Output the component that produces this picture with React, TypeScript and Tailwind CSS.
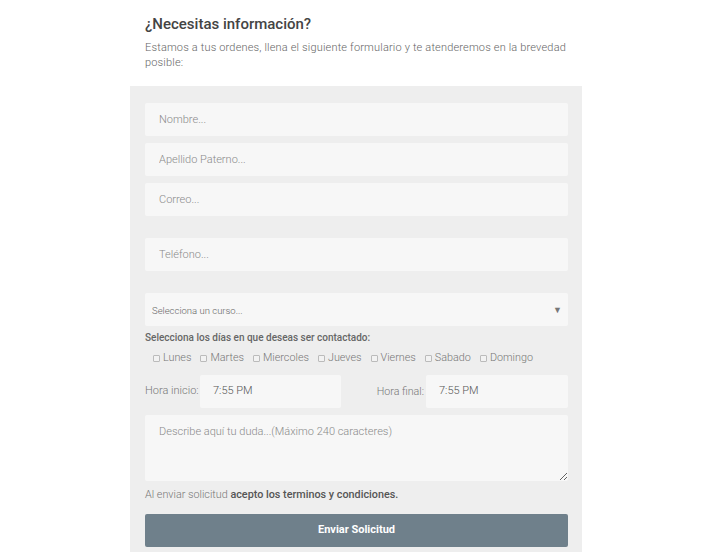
import React from 'react';

const days = ['Lunes', 'Martes', 'Miercoles', 'Jueves', 'Viernes', 'Sabado', 'Domingo'];

const field =
  "w-full h-[33px] rounded-[2px] bg-[#f7f7f7] px-[14px] text-[11px] font-light text-[#555] placeholder:text-[#8a8a8a] outline-none";

export default function App() {
  return (
    <div className="w-[712px] h-[552px] bg-white overflow-hidden font-['Roboto',sans-serif]">
      <div className="ml-[130px] w-[452px]">
        <div className="px-[15px] pt-[14px] pb-[16px]">
          <h2 className="text-[15px] leading-[20px] font-medium text-[#444]">¿Necesitas información?</h2>
          <p className="mt-[6px] text-[11px] tracking-[0.17px] leading-[15px] font-light text-[#666]">
            Estamos a tus ordenes, llena el siguiente formulario y te atenderemos en la brevedad posible:
          </p>
        </div>
        <div className="bg-[#eeeeee] pl-[15px] pr-[14px] pt-[17px] pb-[8px] min-h-[470px]">
          <div className="flex flex-col gap-[7px]">
            <input className={field} placeholder="Nombre..." />
            <input className={field} placeholder="Apellido Paterno..." />
            <input className={field} placeholder="Correo..." />
          </div>
          <input className={`${field} mt-[22px]`} placeholder="Teléfono..." />
          <div className="mt-[22px] h-[33px] rounded-[2px] bg-[#f7f7f7] flex items-center justify-between pl-[7px] pr-[6px] pt-[3px]">
            <span className="text-[9.5px] font-light text-[#666]">Selecciona un curso...</span>
            <span className="text-[9px] text-[#777]">▼</span>
          </div>
          <p className="mt-[5px] text-[10px] leading-[14px] font-medium text-[#666]">
            Selecciona los días en que deseas ser contactado:
          </p>
          <div className="mt-[5px] ml-[8px] flex items-center gap-[9px] text-[10.8px] font-light text-[#777]">
            {days.map((d) => (
              <label key={d} className="flex items-center gap-[3px]">
                <span className="w-[7px] h-[7px] rounded-[1px] border border-[#bbb] bg-[#f2f2f2]"></span>
                {d}
              </label>
            ))}
          </div>
          <div className="mt-[9px] flex items-center">
            <span className="w-[55px] text-[11px] font-light text-[#777]">Hora inicio:</span>
            <div className="w-[141px] h-[33px] rounded-[2px] bg-[#f7f7f7] flex items-center pl-[13px] text-[11px] font-light text-[#555]">
              7:55 PM
            </div>
            <span className="ml-auto mr-[2px] text-[10.7px] font-light text-[#777]">Hora final:</span>
            <div className="w-[142px] h-[33px] rounded-[2px] bg-[#f7f7f7] flex items-center pl-[13px] text-[11px] font-light text-[#555]">
              7:55 PM
            </div>
          </div>
          <textarea
            className="mt-[7px] block w-full h-[66px] rounded-[2px] bg-[#f7f7f7] px-[14px] pt-[9px] text-[11px] font-light text-[#555] placeholder:text-[#8a8a8a] outline-none"
            placeholder="Describe aquí tu duda...(Máximo 240 caracteres)"
          />
          <p className="mt-[7px] text-[10.8px] leading-[14px] font-light text-[#777]">
            Al enviar solicitud <span className="font-medium text-[#555]">acepto los terminos y condiciones.</span>
          </p>
          <button className="mt-[12px] w-full h-[33px] rounded-[2px] bg-[#6f808b] text-[11px] font-bold text-white">
            Enviar Solicitud
          </button>
        </div>
      </div>
    </div>
  );
}
